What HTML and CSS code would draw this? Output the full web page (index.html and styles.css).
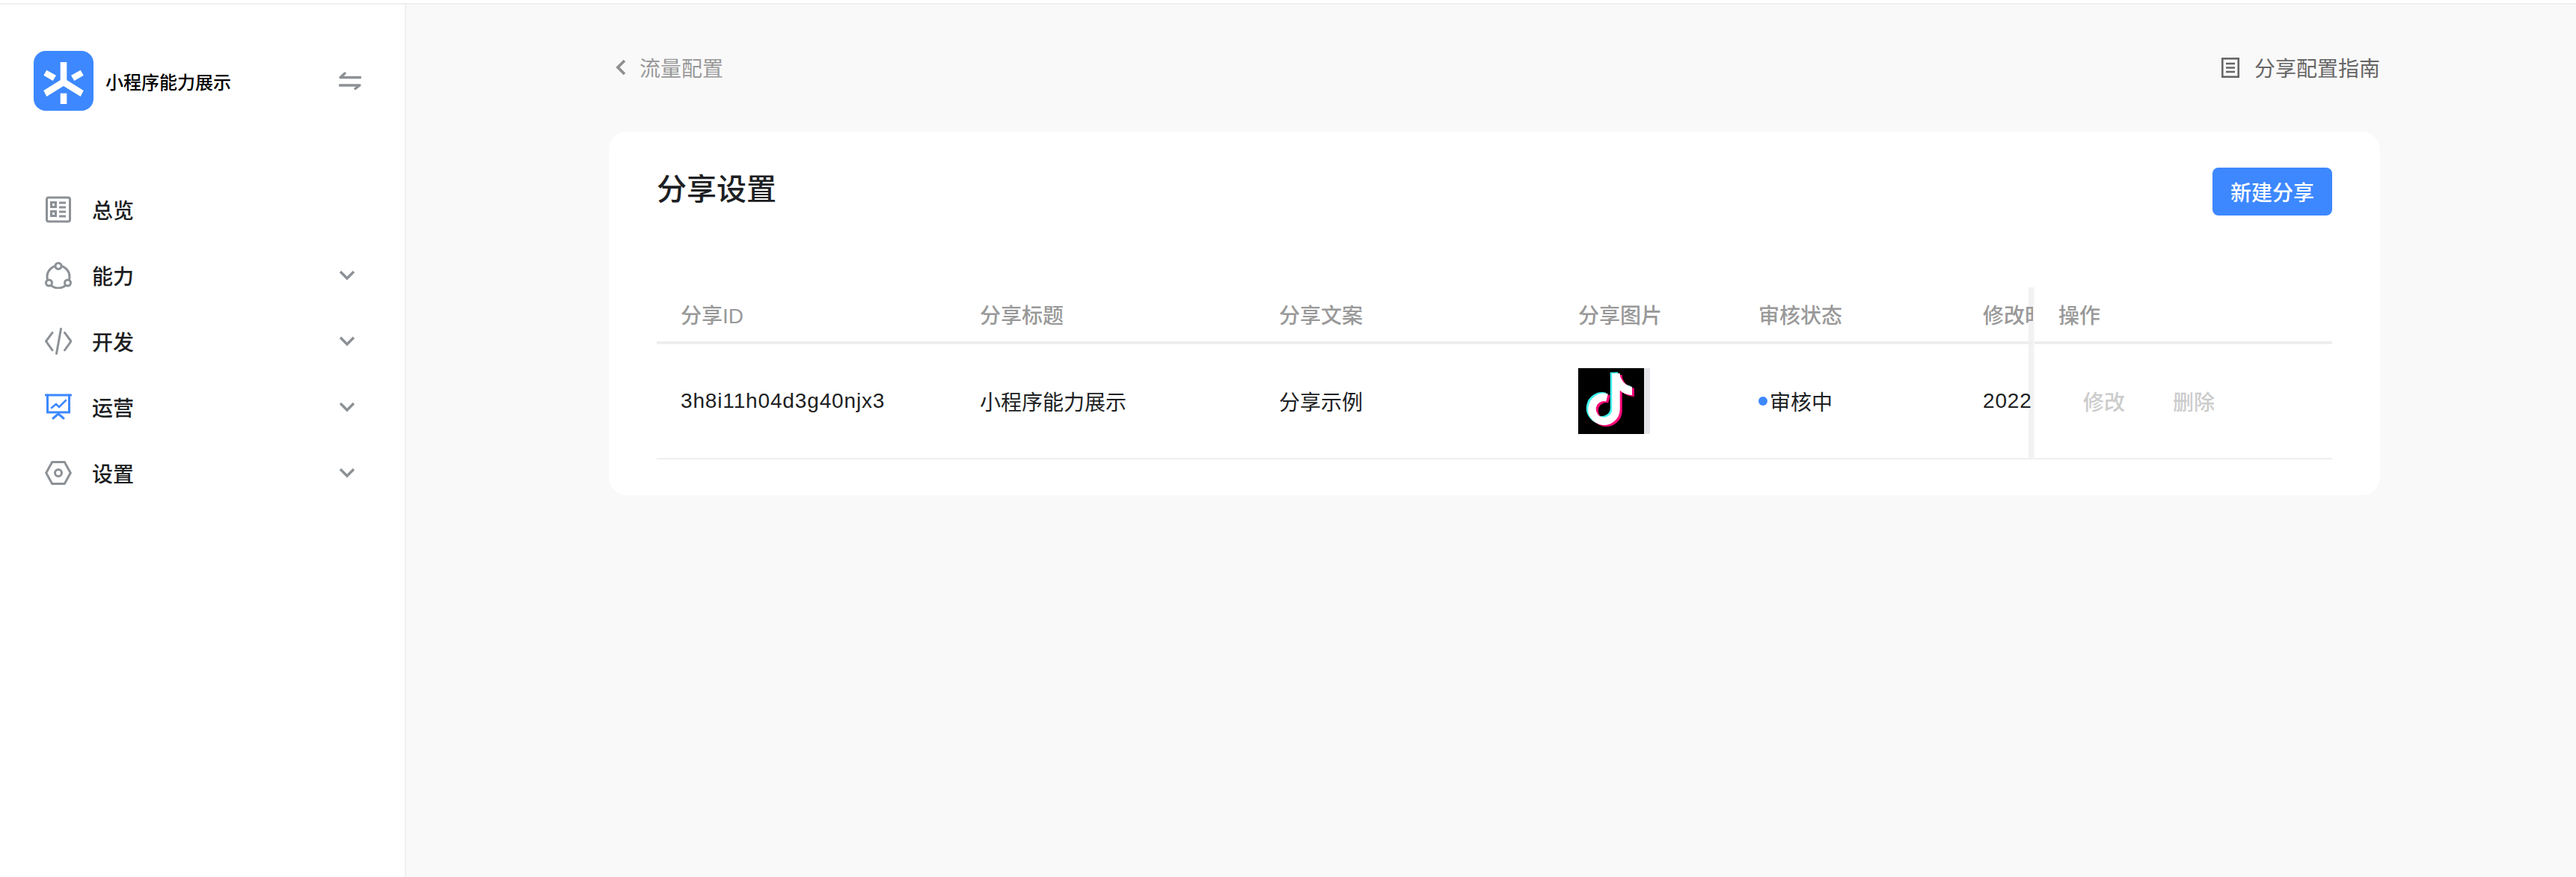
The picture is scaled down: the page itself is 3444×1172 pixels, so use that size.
FILE: index.html
```html
<!DOCTYPE html>
<html lang="zh-CN">
<head>
  <meta charset="UTF-8">
  <title>分享设置</title>
  <link rel="stylesheet" href="styles.css">
</head>
<body>

  <div class="top-line"></div>

  <div class="layout">
    <!-- Sidebar -->
    <aside class="sidebar">
      <div class="app-switch">
        <svg class="logo" viewBox="0 0 80 80">
          <rect width="80" height="80" rx="16" fill="#3d88ff"/>
          <g fill="#fff">
            <polygon points="35.7,15 44.3,15 44.3,39 66.7,53 62.7,61 40,47 17.3,61 13.3,53 35.7,39"/>
            <rect x="35.7" y="56.7" width="8.6" height="14.3"/>
            <polygon points="17.3,25.7 30,32.7 25.7,40 13.3,32.7"/>
            <polygon points="62.7,25.7 50,32.7 54.3,40 66.7,32.7"/>
          </g>
        </svg>
        <span class="app-name">小程序能力展示</span>
        <svg class="swap" viewBox="0 0 30 24" fill="none" stroke="#8c9196" stroke-width="3.4" stroke-linecap="round" stroke-linejoin="round">
          <path d="M28.500 7.500H2L8 2"/>
          <path d="M1.500 18H28L22 22.500"/>
        </svg>
      </div>

      <nav class="nav">
        <div class="nav-item">
          <svg class="nav-icon" viewBox="0 0 36 36" fill="none" stroke="#8c9196" stroke-width="3">
            <rect x="2.500" y="2" width="31" height="32" rx="2.500"/>
            <rect x="8.500" y="8.500" width="6" height="6"/>
            <rect x="8.500" y="20.500" width="6" height="6"/>
            <path d="M19 9H28M19 15H28M19 21H28M19 27H28"/>
          </svg>
          <span class="nav-label">总览</span>
        </div>
        <div class="nav-item">
          <svg class="nav-icon" viewBox="0 0 36 36" fill="none" stroke="#8c9196" stroke-width="3">
            <circle cx="18" cy="20" r="15"/>
            <circle cx="18" cy="5.500" r="4" fill="#fff"/>
            <circle cx="5.500" cy="28" r="4" fill="#fff"/>
            <circle cx="30.500" cy="28" r="4" fill="#fff"/>
          </svg>
          <span class="nav-label">能力</span>
          <svg class="chevron" viewBox="0 0 22 14" fill="none" stroke="#8c9196" stroke-width="3.400"><path d="M2 2L11 11L20 2"/></svg>
        </div>
        <div class="nav-item">
          <svg class="nav-icon" viewBox="0 0 36 36" fill="none" stroke="#8c9196" stroke-width="3" stroke-linecap="round">
            <path d="M10 6.700L1.500 18L10 30"/>
            <path d="M26.500 6.700L35 18L26.500 30"/>
            <path d="M21.500 1.500L15.500 34.500"/>
          </svg>
          <span class="nav-label">开发</span>
          <svg class="chevron" viewBox="0 0 22 14" fill="none" stroke="#8c9196" stroke-width="3.400"><path d="M2 2L11 11L20 2"/></svg>
        </div>
        <div class="nav-item">
          <svg class="nav-icon" viewBox="0 0 36 36" fill="none" stroke="#3d88ff" stroke-width="3" stroke-linecap="round">
            <path d="M1 2H35"/>
            <path d="M3.500 2V25H32.500V2"/>
            <path d="M9 19L15 14L19 18L28 9" stroke-width="2.600"/>
            <path d="M11 33L18 27L25 33"/>
          </svg>
          <span class="nav-label">运营</span>
          <svg class="chevron" viewBox="0 0 22 14" fill="none" stroke="#8c9196" stroke-width="3.400"><path d="M2 2L11 11L20 2"/></svg>
        </div>
        <div class="nav-item">
          <svg class="nav-icon" viewBox="0 0 36 36" fill="none" stroke="#8c9196" stroke-width="3">
            <polygon points="1.700,18 9.700,3.500 26.300,3.500 34.300,18 26.300,32.500 9.700,32.500"/>
            <circle cx="18" cy="18" r="4.500"/>
          </svg>
          <span class="nav-label">设置</span>
          <svg class="chevron" viewBox="0 0 22 14" fill="none" stroke="#8c9196" stroke-width="3.400"><path d="M2 2L11 11L20 2"/></svg>
        </div>
      </nav>
    </aside>

    <!-- Main content -->
    <main class="main">
      <div class="crumbs">
        <a class="back">
          <svg class="back-icon" viewBox="0 0 15 22" fill="none" stroke="#8f8f8f" stroke-width="3.800"><path d="M13 2L4 11L13 20"/></svg>
          流量配置
        </a>
        <a class="guide">
          <svg class="guide-icon" viewBox="0 0 24 27" fill="none" stroke="#666" stroke-width="2.600">
            <rect x="1.300" y="1.300" width="21.400" height="24.400"/>
            <path d="M6 8H18M6 13.500H18M6 19H18"/>
          </svg>
          分享配置指南
        </a>
      </div>

      <section class="card">
        <div class="card-head">
          <h1 class="card-title">分享设置</h1>
          <button class="btn-primary">新建分享</button>
        </div>

        <div class="table">
          <div class="table-scroll">
            <div class="tr th">
              <div class="td">分享ID</div>
              <div class="td">分享标题</div>
              <div class="td">分享文案</div>
              <div class="td">分享图片</div>
              <div class="td">审核状态</div>
              <div class="td">修改时间</div>
            </div>
            <div class="tr">
              <div class="td latin">3h8i11h04d3g40njx3</div>
              <div class="td">小程序能力展示</div>
              <div class="td">分享示例</div>
              <div class="td">
                <div class="thumb">
                  <svg class="thumb-img" viewBox="0 0 88 88">
                    <defs>
                      <g id="note">
                        <path d="M50.500 7V55A16 16 0 1 1 38.500 39.400" fill="none" stroke-width="10.500"/>
                        <path d="M52 7H55Q58 22 72 25V36Q62 36 55 29Z" stroke="none"/>
                      </g>
                    </defs>
                    <rect width="88" height="88" fill="#000"/>
                    <use href="#note" x="-2.500" y="-1.500" fill="#3ff6f0" stroke="#3ff6f0"/>
                    <use href="#note" x="3" y="2" fill="#fe0979" stroke="#fe0979"/>
                    <use href="#note" fill="#fff" stroke="#fff"/>
                  </svg>
                </div>
              </div>
              <div class="td"><span class="dot"></span>审核中</div>
              <div class="td latin">2022,</div>
            </div>
          </div>

          <div class="table-fixed">
            <div class="tr th">
              <div class="td">操作</div>
            </div>
            <div class="tr">
              <div class="td actions">
                <span class="action">修改</span>
                <span class="action">删除</span>
              </div>
            </div>
          </div>
        </div>
      </section>
    </main>
  </div>

</body>
</html>
```

FILE: styles.css
```css
/* General Styles */
* {
  box-sizing: border-box;
}

html, body {
  height: 100%;
}

body {
  margin: 0;
  background-color: #fff;
  color: #1d1f23;
  font-family: "Liberation Sans", "Noto Sans CJK SC", sans-serif;
  font-size: 28px;
  display: flex;
  flex-direction: column;
  overflow: hidden;
}

.top-line {
  height: 6px;
  flex: none;
  border-bottom: 2px solid #eeeff0;
}

.layout {
  flex: 1;
  display: flex;
  min-height: 0;
}

/* Sidebar */
.sidebar {
  width: 543px;
  flex: none;
  border-right: 2px solid #f0f0f0;
  background-color: #fff;
}

.app-switch {
  display: flex;
  align-items: center;
  height: 80px;
  margin-top: 62px;
  padding-left: 45px;
}

.logo {
  width: 80px;
  height: 80px;
  flex: none;
}

.app-name {
  margin-left: 16px;
  font-size: 24px;
  font-weight: 500;
  color: #000;
}

.swap {
  width: 30px;
  height: 24px;
  margin-left: 144px;
}

.nav {
  margin-top: 88px;
}

.nav-item {
  display: flex;
  align-items: center;
  height: 88px;
  padding-left: 60px;
}

.nav-icon {
  width: 36px;
  height: 36px;
  flex: none;
}

.nav-label {
  margin-left: 27px;
  font-weight: 500;
}

.chevron {
  width: 22px;
  height: 14px;
  margin-left: 274px;
}

/* Main content */
.main {
  flex: 1;
  min-width: 0;
  padding: 64px 262px 0 271px;
  background-color: #f9f9f9;
}

.crumbs {
  display: flex;
  justify-content: space-between;
  align-items: center;
  height: 40px;
  margin-bottom: 66px;
}

.back,
.guide {
  display: flex;
  align-items: center;
  color: #999;
}

.guide {
  color: #666;
}

.back-icon {
  width: 15px;
  height: 22px;
  margin: 0 18px 0 8px;
}

.guide-icon {
  width: 24px;
  height: 27px;
  margin-right: 20px;
}

.card {
  padding: 48px 64px;
  background-color: #fff;
  border-radius: 24px;
}

.card-head {
  display: flex;
  justify-content: space-between;
  align-items: flex-start;
  margin-bottom: 96px;
}

.card-title {
  margin: 0;
  font-size: 40px;
  font-weight: 500;
  line-height: 58px;
}

.btn-primary {
  width: 160px;
  height: 64px;
  padding: 0;
  border: none;
  border-radius: 8px;
  background-color: #3d88ff;
  color: #fff;
  font: inherit;
  font-weight: 500;
}

/* Table */
.table {
  display: flex;
}

.table-scroll {
  position: relative;
  width: 1840px;
  flex: none;
  overflow: hidden;
}

.table-scroll::before {
  content: "";
  position: absolute;
  top: 0;
  right: 0;
  bottom: 0;
  width: 6px;
  background-color: #f2f2f2;
}

.table-fixed {
  flex: 1;
  border-left: 2px solid #f6f6f6;
}

.tr {
  position: relative;
  display: grid;
  align-items: center;
  height: 154px;
  border-bottom: 2px solid #eeeeee;
}

.table-scroll .tr {
  grid-template-columns: 400px 400px 400px 241px 300px 400px;
  width: 1841px;
}

.tr.th {
  height: 76px;
  border-bottom: 4px solid #eeeeee;
  color: #999;
  font-weight: 500;
}

.td {
  display: flex;
  align-items: center;
  padding-left: 32px;
  white-space: nowrap;
}

.latin {
  letter-spacing: 0.85px;
}

.thumb {
  width: 96px;
  height: 88px;
  background-color: #e4e5e9;
}

.thumb-img {
  display: block;
  width: 88px;
  height: 88px;
}

.dot {
  width: 12px;
  height: 12px;
  margin-right: 3px;
  border-radius: 50%;
  background-color: #3d88ff;
}

.actions {
  gap: 64px;
  padding-left: 65px;
}

.action {
  color: #ccc;
  font-weight: 500;
}
```
